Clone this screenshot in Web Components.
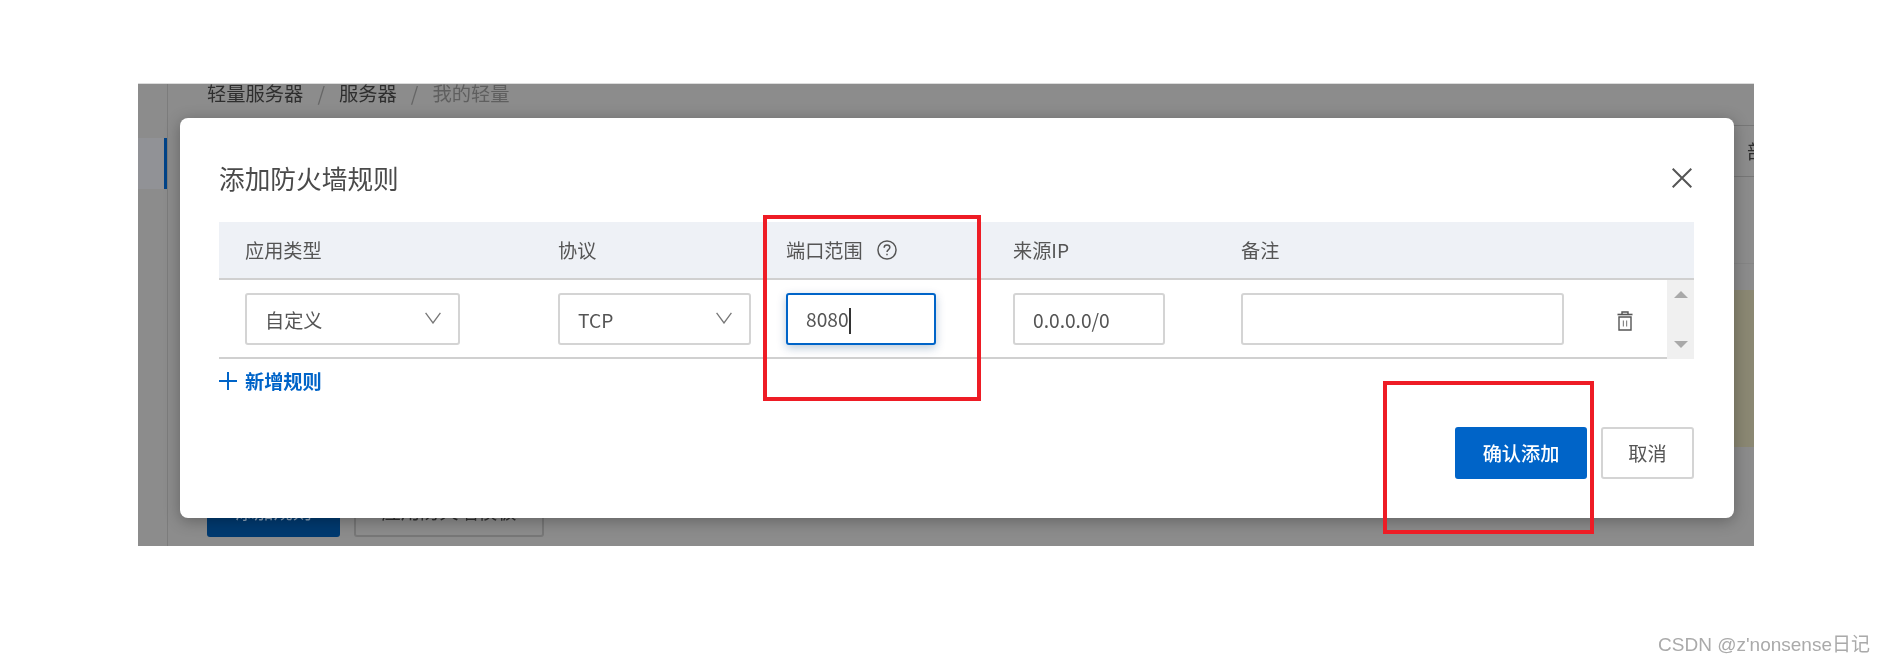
<!DOCTYPE html>
<html lang="zh-CN">
<head>
<meta charset="utf-8">
<title>添加防火墙规则</title>
<style>
    html, body { margin: 0; height: 663px; overflow: hidden; background: #fff; }
    body { font-family: "Noto Sans CJK SC", "Noto Sans", sans-serif; }
</style>
</head>
<body>
<shot-page>
    <console-backdrop slot="behind"></console-backdrop>
    <rule-dialog heading="添加防火墙规则" slot="over">
        <rule-table>
            <table-head slot="head">
                <span>应用类型</span>
                <span>协议</span>
                <span class="help">端口范围<help-icon></help-icon></span>
                <span>来源IP</span>
                <span>备注</span>
            </table-head>
            <rule-select style="width:215px">自定义</rule-select>
            <rule-select style="width:193px">TCP</rule-select>
            <rule-input style="width:150px" focused>8080</rule-input>
            <rule-input style="width:152px">0.0.0.0/0</rule-input>
            <note-cell></note-cell>
        </rule-table>
        <add-rule>新增规则</add-rule>
        <rule-button slot="footer" kind="primary" style="width:132px">确认添加</rule-button>
        <rule-button slot="footer" style="width:93px">取消</rule-button>
    </rule-dialog>
    <mark-box slot="over" style="left:625px;top:131px;width:218px;height:186px"></mark-box>
    <mark-box slot="over" style="left:1245px;top:297px;width:211px;height:153px"></mark-box>
</shot-page>

<script>
(function () {
    const fontStack = '"Noto Sans CJK SC", "Noto Sans", sans-serif';

    // 简单的基类：把样式和结构写进 shadow root
    class ShadowBlock extends HTMLElement {
        constructor() {
            super();
            this.attachShadow({ mode: 'open' });
        }

        connectedCallback() {
            this.shadowRoot.innerHTML = `<style>${this.styles()}</style>${this.markup()}`;
        }

        styles() { return ''; }
        markup() { return '<slot></slot>'; }
    }

    class ShotPage extends ShadowBlock {
        styles() {
            return `
                :host { display: flex; flex-direction: column; height: 663px; padding: 83px 0 0 138px; box-sizing: border-box; }
                .frame { position: relative; width: 1616px; height: 463px; overflow: hidden; background: #8c8c8c; border-top: 1px solid #dcdcdc; box-sizing: border-box; filter: blur(.35px); }
                .footer { display: flex; justify-content: flex-end; padding: 88px 15px 0 0; }
                .mark { font: 19px/22px "Liberation Sans", "Noto Sans CJK SC", sans-serif; color: #aaa; filter: blur(.35px); }
            `;
        }

        markup() {
            return `
                <div class="frame"><slot name="behind"></slot><slot name="over"></slot></div>
                <div class="footer"><span class="mark">CSDN @z'nonsense日记</span></div>
            `;
        }
    }

    // 遮罩层后面被压暗的控制台页面
    class ConsoleBackdrop extends ShadowBlock {
        styles() {
            return `
                :host { display: flex; height: 100%; font-family: ${fontStack}; font-size: 19.3px; color: #2e2e2e; }
                .side { width: 29px; flex: none; box-sizing: content-box; border-right: 1px solid #7c7c7c; padding-top: 54px; }
                .side i { display: block; height: 51px; box-sizing: border-box; background: #919296; border-right: 3px solid #004388; }
                .main { flex: 1; display: flex; flex-direction: column; min-width: 0; padding-left: 39px; }
                .crumbs { display: flex; gap: 14px; height: 24px; line-height: 20px; margin-top: -1px; }
                .crumbs .sep { color: #666; }
                .crumbs .now { color: #5f5f5f; }
                .right { position: absolute; right: 0; top: 41px; width: 21px; }
                .right div { border-top: 1px solid #777; }
                .right .a { height: 50px; overflow: hidden; line-height: 50px; padding-left: 14px; white-space: nowrap; }
                .right .b { height: 86px; }
                .right .c { height: 26px; border-top-color: #858585; }
                .right .d { height: 157px; border: 0; background: #8b8873; }
                .btns { display: flex; gap: 14px; margin-top: auto; margin-bottom: 9px; }
                .btns span { display: flex; align-items: center; justify-content: center; height: 52px; box-sizing: border-box; border-radius: 3px; }
                .blue { width: 133px; background: #003a70; color: #8fa6bd; }
                .line { width: 190px; border: 2px solid #777; color: #2e2e2e; }
            `;
        }

        markup() {
            return `
                <div class="side"><i></i></div>
                <div class="main">
                    <div class="crumbs">
                        <span>轻量服务器</span><span class="sep">/</span><span>服务器</span><span class="sep">/</span><span class="now">我的轻量</span>
                    </div>
                    <div class="right">
                        <div class="a">部</div><div class="b"></div><div class="c"></div><div class="d"></div>
                    </div>
                    <div class="btns"><span class="blue">添加规则</span><span class="line">应用防火墙模板</span></div>
                </div>
            `;
        }
    }

    class RuleDialog extends ShadowBlock {
        styles() {
            return `
                :host { position: absolute; left: 42px; top: 34px; width: 1554px; height: 400px; box-sizing: border-box; padding: 43px 40px 0 39px; background: #fff; border-radius: 8px; box-shadow: 0 3px 16px rgba(0, 0, 0, .3); font-family: ${fontStack}; color: #555; }
                .head { display: flex; align-items: center; justify-content: space-between; height: 34px; margin-bottom: 27px; }
                h2 { margin: 0; font-size: 25.7px; font-weight: 400; color: #4a4a4a; line-height: 34px; }
                svg { display: block; margin-right: 2px; }
                .foot { display: flex; justify-content: flex-end; gap: 14px; margin-top: 32px; }
            `;
        }

        markup() {
            return `
                <div class="head">
                    <h2>${this.getAttribute('heading')}</h2>
                    <svg width="20" height="20" viewBox="0 0 20 20" fill="none" stroke="#555" stroke-width="2"><path d="M.7.7l18.6 18.6M19.3.7L.7 19.3"/></svg>
                </div>
                <slot></slot>
                <div class="foot"><slot name="footer"></slot></div>
            `;
        }
    }

    class RuleTable extends ShadowBlock {
        styles() {
            return `
                :host { display: block; width: 1475px; }
                .row { display: flex; height: 79px; }
                .cells { flex: 1; display: grid; grid-template-columns: 339px 228px 227px 228px 1fr; align-items: center; padding-top: 13px; padding-bottom: 12px; box-sizing: border-box; border-bottom: 2px solid #d0d0d0; }
                ::slotted(rule-select:first-of-type) { margin-left: 26px; }
                .bar { width: 27px; background: #f0f0f0; display: flex; flex-direction: column; justify-content: space-between; align-items: center; padding: 11px 0; box-sizing: border-box; }
                .bar i { width: 0; height: 0; border: 7.5px solid transparent; }
                .up { border-bottom-color: #a9a9a9 !important; border-top-width: 0 !important; }
                .down { border-top-color: #a9a9a9 !important; border-bottom-width: 0 !important; }
            `;
        }

        markup() {
            return `
                <slot name="head"></slot>
                <div class="row">
                    <div class="cells"><slot></slot></div>
                    <div class="bar"><i class="up"></i><i class="down"></i></div>
                </div>
            `;
        }
    }

    class TableHead extends ShadowBlock {
        styles() {
            return `
                :host { display: grid; grid-template-columns: 339px 228px 227px 228px 1fr; align-items: center; height: 58px; box-sizing: border-box; border-bottom: 2px solid #d0d0d0; background: #eef1f6; font-size: 19.2px; color: #555; }
                ::slotted(:first-child) { padding-left: 26px; }
                ::slotted(.help) { display: flex; align-items: center; gap: 14px; }
            `;
        }
    }

    class HelpIcon extends ShadowBlock {
        styles() { return ':host { display: inline-flex; }'; }

        markup() {
            return `<svg width="20" height="20" viewBox="0 0 19 19" fill="none" stroke="#555" stroke-width="1.4">
                <circle cx="9.5" cy="9.5" r="8.6"/>
                <path d="M6.8 7.4c0-1.6 1.2-2.6 2.7-2.6s2.7 1 2.7 2.4c0 2-2.7 2-2.7 4.2"/>
                <path d="M9.5 13v1.4"/>
            </svg>`;
        }
    }

    const controlStyles = `
        height: 52px; box-sizing: border-box; border: 2px solid #d4d4d4; border-radius: 3px; background: #fff;
        align-items: center; font-size: 19.2px; color: #555; padding: 1px 0 0 18px;
    `;

    class RuleSelect extends ShadowBlock {
        styles() {
            return `
                :host { display: flex; ${controlStyles} padding-right: 17px; justify-content: space-between; }
                svg { display: block; margin-top: -3px; }
            `;
        }

        markup() {
            return `<span><slot></slot></span>
                <svg width="16" height="12" viewBox="0 0 16 12" fill="none" stroke="#777" stroke-width="1.3"><path d="M.6.8L8 11l7.4-10.2"/></svg>`;
        }
    }

    class RuleInput extends ShadowBlock {
        styles() {
            return `
                :host { display: flex; ${controlStyles} }
                :host([focused]) { border-color: #0064c8; box-shadow: 0 3px 10px rgba(0, 60, 120, .28); }
                i { display: inline-block; width: 2px; height: 26px; margin-left: 0; background: #333; vertical-align: middle; }
            `;
        }

        markup() {
            const caret = this.hasAttribute('focused') ? '<i></i>' : '';
            return `<span><slot></slot>${caret}</span>`;
        }
    }

    class NoteCell extends ShadowBlock {
        styles() {
            return `
                :host { display: flex; align-items: center; }
                .box { width: 323px; ${controlStyles} }
                svg { display: block; margin: 3px 0 0 53px; }
            `;
        }

        markup() {
            return `<div class="box"></div>
                <svg width="16" height="20" viewBox="0 0 16 20" fill="none" stroke="#555" stroke-width="1.4">
                    <path d="M5 3V1h6v2"/>
                    <path d="M.5 3.5h15" stroke-width="1.6"/>
                    <path d="M2 6h12v13H2z"/>
                    <path d="M6.4 9.5v6M9.6 9.5v6" stroke-width="1.2" stroke="#888"/>
                </svg>`;
        }
    }

    class AddRule extends ShadowBlock {
        styles() {
            return `
                :host { display: flex; align-items: center; gap: 8px; height: 28px; margin-top: 8px; font-size: 19.2px; font-weight: 700; color: #0064c8; }
                svg { display: block; }
            `;
        }

        markup() {
            return `<svg width="18" height="18" viewBox="0 0 18 18" stroke="#0064c8" stroke-width="2"><path d="M9 0v18M0 9h18"/></svg><span><slot></slot></span>`;
        }
    }

    class RuleButton extends ShadowBlock {
        styles() {
            return `
                :host { display: flex; align-items: center; justify-content: center; height: 52px; box-sizing: border-box; border: 2px solid #d4d4d4; border-radius: 3px; background: #fff; font-size: 19.2px; color: #555; }
                :host([kind="primary"]) { border-color: #0064c8; background: #0064c8; color: #fff; font-weight: 500; }
            `;
        }
    }

    // 截图上后加的红色标注框
    class MarkBox extends ShadowBlock {
        styles() {
            return ':host { position: absolute; box-sizing: border-box; border: 4px solid #ee1c25; }';
        }

        markup() { return ''; }
    }

    const elements = {
        'shot-page': ShotPage,
        'console-backdrop': ConsoleBackdrop,
        'rule-dialog': RuleDialog,
        'rule-table': RuleTable,
        'table-head': TableHead,
        'help-icon': HelpIcon,
        'rule-select': RuleSelect,
        'rule-input': RuleInput,
        'note-cell': NoteCell,
        'add-rule': AddRule,
        'rule-button': RuleButton,
        'mark-box': MarkBox
    };

    Object.keys(elements).forEach((name) => customElements.define(name, elements[name]));
}());
</script>
</body>
</html>
